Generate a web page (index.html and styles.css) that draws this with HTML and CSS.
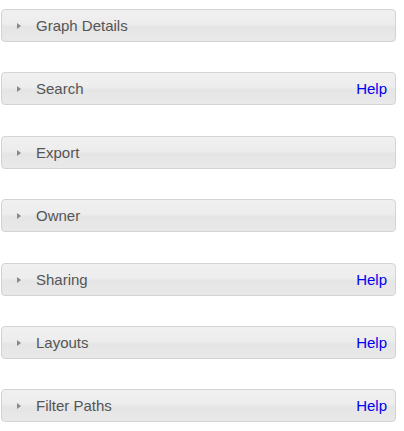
FILE: index.html
```html
<!DOCTYPE html>
<html lang="en">
  <head>
    <meta charset="UTF-8" />
    <title>Graph Panels</title>
    <link rel="stylesheet" href="styles.css">
  </head>
  <body>
    <div class="panels">
      <div class="panel">
        <span class="arrow"></span>
        <span class="title">Graph Details</span>
      </div>
      <div class="panel wide">
        <span class="arrow"></span>
        <span class="title">Search</span>
        <a class="help" href="#">Help</a>
      </div>
      <div class="panel">
        <span class="arrow"></span>
        <span class="title">Export</span>
      </div>
      <div class="panel wide">
        <span class="arrow"></span>
        <span class="title">Owner</span>
      </div>
      <div class="panel">
        <span class="arrow"></span>
        <span class="title">Sharing</span>
        <a class="help" href="#">Help</a>
      </div>
      <div class="panel">
        <span class="arrow"></span>
        <span class="title">Layouts</span>
        <a class="help" href="#">Help</a>
      </div>
      <div class="panel">
        <span class="arrow"></span>
        <span class="title">Filter Paths</span>
        <a class="help" href="#">Help</a>
      </div>
    </div>
  </body>
</html>
```

FILE: styles.css
```css
body {
  margin: 0;
  padding: 0;
  background: #fff;
  font-family: "Liberation Sans", Arial, sans-serif;
  overflow: hidden;
}

.panels {
  width: 395px;
  padding: 9px 0 0 1px;
}

.panel {
  box-sizing: border-box;
  height: 33px;
  margin-bottom: 30px;
  display: flex;
  align-items: center;
  border: 1px solid #d3d3d3;
  border-radius: 4px;
  background: linear-gradient(#f0f0f0 0%, #ededed 45%, #e5e5e5 55%, #e9e9e9 100%);
  padding: 0 8px 0 15px;
}

/* a few gaps are one pixel taller */
.panel.wide {
  margin-bottom: 31px;
}

.panel:last-child {
  margin-bottom: 0;
}

.arrow {
  width: 0;
  height: 0;
  border-top: 3.5px solid transparent;
  border-bottom: 3.5px solid transparent;
  border-left: 4px solid #888;
  margin-right: 15px;
}

.title {
  flex: 1;
  font-size: 15px;
  color: #555;
}

.help {
  font-size: 15px;
  color: #0000ee;
  text-decoration: none;
}
```
